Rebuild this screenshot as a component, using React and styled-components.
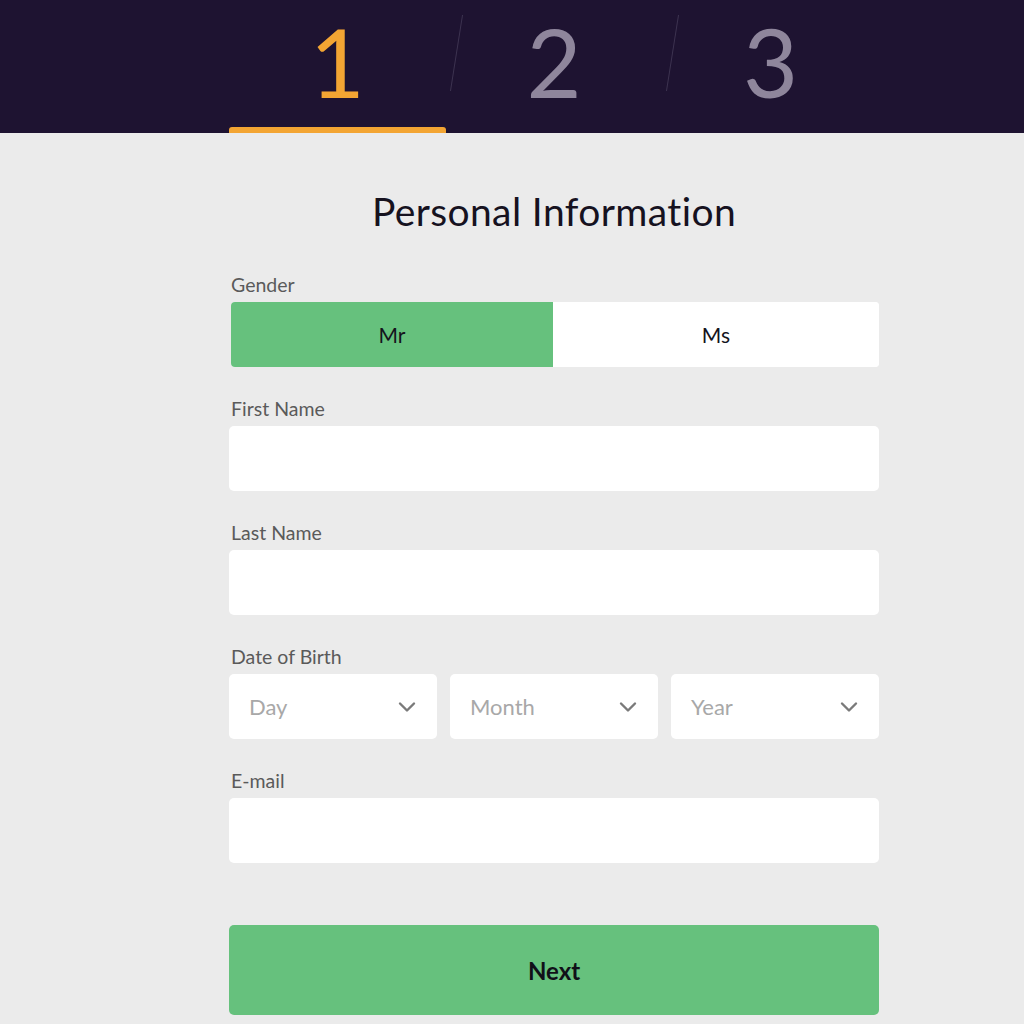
import React from "react";
import styled, { createGlobalStyle } from "styled-components";

const Global = createGlobalStyle`
  html, body { margin: 0; padding: 0; background: #ebebeb; }
  body { font-family: "Lato", "Noto Sans", sans-serif; }
  * { box-sizing: border-box; }
`;

const Header = styled.header`
  background: #1e1331;
  height: 133px;
`;

const Steps = styled.div`
  margin-left: 229px;
  width: 650px;
  height: 100%;
  display: grid;
  grid-template-columns: repeat(3, 1fr);
`;

const Step = styled.div`
  position: relative;
  display: flex;
  justify-content: center;
  align-items: flex-start;
  padding-top: 4px;
  font-size: 95px;
  font-weight: 400;
  line-height: 1.2;
  color: ${p => (p.$active ? "#f3a533" : "#8f869c")};
  &::after {
    content: "";
    display: ${p => (p.$active ? "block" : "none")};
    position: absolute;
    left: 0;
    right: 0;
    bottom: 0;
    height: 6px;
    border-radius: 3px 3px 0 0;
    background: #f3a533;
  }
`;

const Slash = styled.span`
  position: absolute;
  left: 10px;
  top: 15px;
  width: 1px;
  height: 76px;
  background: #3d3350;
  transform: skewX(-9deg);
`;

const Main = styled.main`
  margin-left: 229px;
  width: 650px;
  padding-top: 55px;
  display: flex;
  flex-direction: column;
`;

const Title = styled.h1`
  margin: 0 0 40px;
  text-align: center;
  font-size: 39px;
  font-weight: 400;
  color: #16121f;
  letter-spacing: 0.4px;
`;

const Field = styled.div`
  display: flex;
  flex-direction: column;
  gap: 6px;
  margin-bottom: ${p => p.$mb ?? 31}px;
`;

const Label = styled.label`
  padding-left: 2px;
  font-size: 19.5px;
  line-height: 22px;
  color: #5a5a5a;
`;

const Toggle = styled.div`
  display: grid;
  grid-template-columns: 322px 1fr;
  height: 65px;
  margin-left: 2px;
  border-radius: 4px;
  overflow: hidden;
  background: #fff;
`;

const ToggleOpt = styled.div`
  display: flex;
  align-items: center;
  justify-content: center;
  font-size: 21px;
  color: #15131c;
  background: ${p => (p.$on ? "#66c17d" : "#fff")};
`;

const Input = styled.div`
  height: 65px;
  background: #fff;
  border-radius: 5px;
`;

const SelectRow = styled.div`
  display: grid;
  grid-template-columns: repeat(3, 1fr);
  gap: 13px;
`;

const Select = styled.div`
  height: 65px;
  background: #fff;
  border-radius: 5px;
  display: flex;
  align-items: center;
  justify-content: space-between;
  padding: 0 21px 0 20px;
  font-size: 22px;
  color: #a8a8a8;
`;

const Button = styled.button`
  margin-top: 62px;
  height: 90px;
  border: none;
  border-radius: 5px;
  background: #66c17d;
  font-family: inherit;
  font-size: 24px;
  font-weight: 700;
  color: #101018;
`;

const Chevron = () => (
  <svg width="18" height="12" viewBox="0 0 18 12" fill="none">
    <path d="M2 2.5 L9 9.5 L16 2.5" stroke="#7a7a7a" strokeWidth="2.4" strokeLinecap="round" strokeLinejoin="round" />
  </svg>
);

export default function App() {
  return (
    <>
      <Global />
      <Header>
        <Steps>
          <Step $active>1</Step>
          <Step><Slash />2</Step>
          <Step><Slash />3</Step>
        </Steps>
      </Header>
      <Main>
        <Title>Personal Information</Title>
        <Field>
          <Label>Gender</Label>
          <Toggle>
            <ToggleOpt $on>Mr</ToggleOpt>
            <ToggleOpt>Ms</ToggleOpt>
          </Toggle>
        </Field>
        <Field>
          <Label>First Name</Label>
          <Input />
        </Field>
        <Field>
          <Label>Last Name</Label>
          <Input />
        </Field>
        <Field>
          <Label>Date of Birth</Label>
          <SelectRow>
            <Select>Day<Chevron /></Select>
            <Select>Month<Chevron /></Select>
            <Select>Year<Chevron /></Select>
          </SelectRow>
        </Field>
        <Field $mb={0}>
          <Label>E-mail</Label>
          <Input />
        </Field>
        <Button>Next</Button>
      </Main>
    </>
  );
}
